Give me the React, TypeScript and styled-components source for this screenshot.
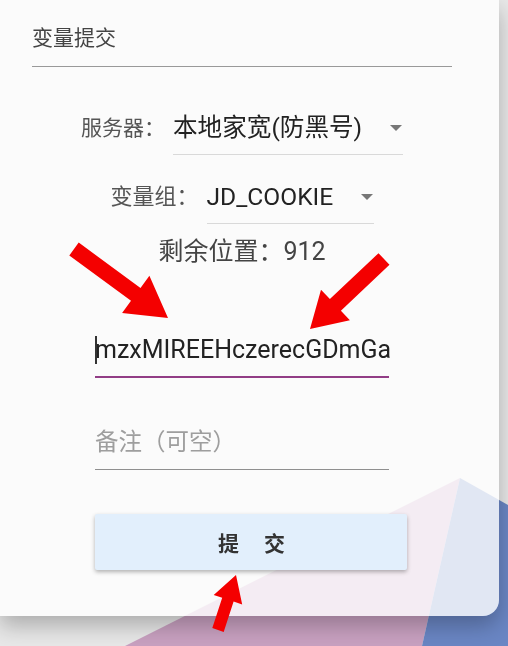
import React from "react";
import styled, { createGlobalStyle } from "styled-components";

const GlobalStyle = createGlobalStyle`
  html, body { margin: 0; padding: 0; }
  body {
    background: #ececec;
    font-family: Roboto, "Noto Sans CJK SC", sans-serif;
    width: 508px;
    height: 646px;
    overflow: hidden;
  }
`;

const Backdrop = styled.svg`
  position: fixed;
  inset: 0;
  width: 508px;
  height: 646px;
  z-index: 0;
`;

const Card = styled.div`
  position: relative;
  z-index: 1;
  width: 499px;
  box-sizing: border-box;
  padding: 26px 47px 46px 32px;
  background: rgba(255, 255, 255, 0.8);
  border-radius: 0 0 16px 0;
  box-shadow: 0 10px 22px rgba(0, 0, 0, 0.26);
`;

const Title = styled.div`
  font-size: 21px;
  line-height: 24px;
  color: #444;
`;

const Divider = styled.div`
  height: 1px;
  background: #999;
  margin-top: 16px;
`;

const Form = styled.div`
  display: flex;
  flex-direction: column;
  align-items: center;
`;

const Row = styled.div<{ $top: number }>`
  display: flex;
  align-items: flex-start;
  gap: 8px;
  margin-top: ${(p) => p.$top}px;
`;

const Label = styled.span<{ $size: number }>`
  font-size: ${(p) => p.$size}px;
  line-height: 32px;
  color: #555;
`;

const Select = styled.div<{ $width: number }>`
  display: flex;
  align-items: center;
  width: ${(p) => p.$width}px;
  padding-bottom: 10px;
  border-bottom: 1px solid #d9d9d9;
  font-size: 24.6px;
  line-height: 32px;
  color: #222;
`;

const Caret = styled.span`
  margin-left: auto;
  margin-right: 1px;
  width: 0;
  height: 0;
  border-left: 6px solid transparent;
  border-right: 6px solid transparent;
  border-top: 6px solid #777;
`;

const Remain = styled.div`
  margin-top: 12px;
  font-size: 25px;
  line-height: 32px;
  color: #444;
`;

const Fields = styled.div`
  align-self: flex-start;
  margin-left: 63px;
  display: flex;
  flex-direction: column;
`;

const Field = styled.div<{ $top: number; $focused?: boolean }>`
  position: relative;
  width: 294px;
  margin-top: ${(p) => p.$top}px;
  padding-bottom: ${(p) => (p.$focused ? 10 : 11)}px;
  border-bottom: ${(p) => (p.$focused ? "2px solid #923d86" : "1px solid #8f8f8f")};
  font-size: ${(p) => (p.$focused ? 25 : 23.5)}px;
  line-height: 32px;
  color: ${(p) => (p.$focused ? "#222" : "#9e9e9e")};
  white-space: nowrap;
`;

const TextCursor = styled.span`
  position: absolute;
  left: 0;
  top: 2px;
  width: 2px;
  height: 28px;
  background: #333;
`;

const Submit = styled.button`
  margin-top: 44px;
  width: 312px;
  height: 56px;
  border: none;
  border-radius: 2px;
  background: #e2effc;
  box-shadow: 0 2px 4px rgba(0, 0, 0, 0.3);
  display: flex;
  align-items: center;
  justify-content: center;
  gap: 25px;
  font-family: Roboto, "Noto Sans CJK SC", sans-serif;
  font-size: 21px;
  font-weight: 700;
  color: #333;
  padding: 0 0 0 1px;
`;

const Overlay = styled.svg`
  position: absolute;
  left: 0;
  top: 0;
  width: 508px;
  height: 646px;
  pointer-events: none;
  overflow: visible;
`;

type Pt = [number, number];

function arrowPoints(tail: Pt, tip: Pt, shaft: number, headW: number, headL: number): string {
  const dx = tip[0] - tail[0];
  const dy = tip[1] - tail[1];
  const len = Math.hypot(dx, dy);
  const ux = dx / len;
  const uy = dy / len;
  const nx = -uy;
  const ny = ux;
  const bx = tip[0] - ux * headL;
  const by = tip[1] - uy * headL;
  const pts: Pt[] = [
    [tail[0] + (nx * shaft) / 2, tail[1] + (ny * shaft) / 2],
    [bx + (nx * shaft) / 2, by + (ny * shaft) / 2],
    [bx + (nx * headW) / 2, by + (ny * headW) / 2],
    tip,
    [bx - (nx * headW) / 2, by - (ny * headW) / 2],
    [bx - (nx * shaft) / 2, by - (ny * shaft) / 2],
    [tail[0] - (nx * shaft) / 2, tail[1] - (ny * shaft) / 2],
  ];
  return pts.map((p) => `${p[0].toFixed(1)},${p[1].toFixed(1)}`).join(" ");
}

const arrows: { tail: Pt; tip: Pt; shaft: number; headW: number; headL: number }[] = [
  { tail: [74, 249], tip: [168, 318], shaft: 16, headW: 46, headL: 40 },
  { tail: [384, 259], tip: [310, 329], shaft: 16, headW: 42, headL: 35 },
  { tail: [218, 630], tip: [236, 575], shaft: 12, headW: 30, headL: 26 },
];

export default function App() {
  return (
    <>
      <GlobalStyle />
      <Backdrop viewBox="0 0 508 646">
        <rect x="0" y="0" width="508" height="646" fill="#e8e8e8" />
        <polygon points="460,478 125,646 422,646" fill="#c9a1c1" />
        <polygon points="460,478 508,505 508,646 422,646" fill="#6a86c4" />
      </Backdrop>
      <Card>
        <Title>变量提交</Title>
        <Divider />
        <Form>
          <Row $top={45}>
            <Label $size={21}>服务器：</Label>
            <Select $width={230}>
              本地家宽(防黑号)
              <Caret />
            </Select>
          </Row>
          <Row $top={26}>
            <Label $size={22}>变量组：</Label>
            <Select $width={167}>
              JD_COOKIE
              <Caret />
            </Select>
          </Row>
          <Remain>剩余位置：912</Remain>
          <Fields>
            <Field $top={66} $focused>
              <TextCursor />
              mzxMIREEHczerecGDmGa
            </Field>
            <Field $top={48}>备注（可空）</Field>
            <Submit type="button">
              <span>提</span>
              <span>交</span>
            </Submit>
          </Fields>
        </Form>
        <Overlay viewBox="0 0 508 646">
          {arrows.map((a, i) => (
            <polygon key={i} points={arrowPoints(a.tail, a.tip, a.shaft, a.headW, a.headL)} fill="#f40000" />
          ))}
        </Overlay>
      </Card>
    </>
  );
}
